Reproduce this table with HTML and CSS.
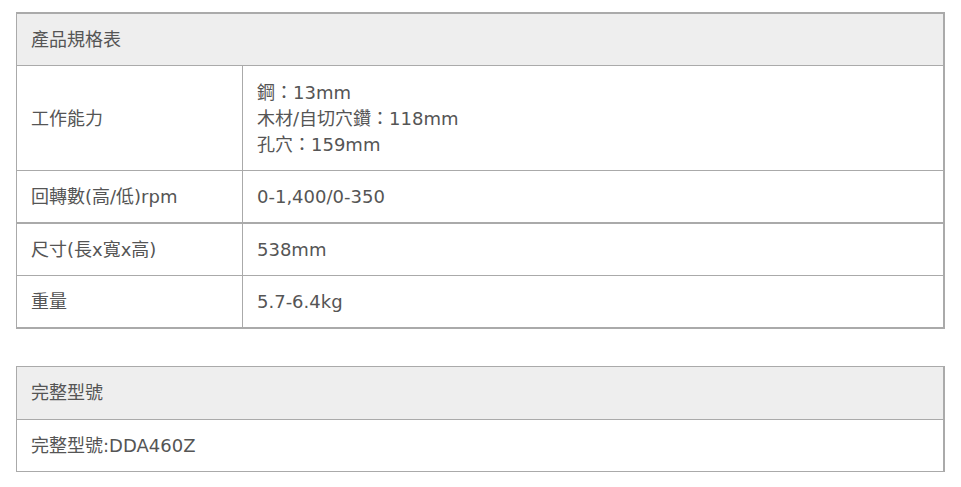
FILE: index.html
```html
<!DOCTYPE html>
<html lang="zh-Hant">
<head>
  <meta charset="UTF-8" />
  <meta name="viewport" content="width=device-width, initial-scale=1.0"/>
  <title>產品規格表</title>
  <link rel="stylesheet" href="styles.css">
</head>
<body>

  <div class="spec-wrap">
    <table class="spec-table">
      <tr>
        <th colspan="2">產品規格表</th>
      </tr>
      <tr class="tall">
        <td class="spec-label">工作能力</td>
        <td class="spec-value">鋼：13mm<br>木材/自切穴鑽：118mm<br>孔穴：159mm</td>
      </tr>
      <tr class="thick">
        <td class="spec-label">回轉數(高/低)rpm</td>
        <td class="spec-value">0-1,400/0-350</td>
      </tr>
      <tr>
        <td class="spec-label">尺寸(長x寬x高)</td>
        <td class="spec-value">538mm</td>
      </tr>
      <tr class="last">
        <td class="spec-label">重量</td>
        <td class="spec-value">5.7-6.4kg</td>
      </tr>
    </table>

    <table class="spec-table model-table">
      <tr>
        <th>完整型號</th>
      </tr>
      <tr class="last">
        <td>完整型號:DDA460Z</td>
      </tr>
    </table>
  </div>

</body>
</html>
```

FILE: styles.css
```css
body {
  margin: 0;
  font-family: "DejaVu Sans", "Noto Sans CJK TC", sans-serif;
  font-size: 18px;
  color: #555;
  background-color: white;
}

.spec-wrap {
  padding: 12px 16px 0 16px;
  display: flex;
  flex-direction: column;
  gap: 37px;
}

.spec-table {
  width: 100%;
  border-collapse: separate;
  border-spacing: 0;
  border-top: 2px solid #aaa;
  border-right: 2px solid #aaa;
  border-bottom: 2px solid #aaa;
  border-left: 1px solid #aaa;
}

.spec-table th,
.spec-table td {
  text-align: left;
  font-weight: normal;
  line-height: 26px;
  padding: 13px 14px 12px 14px;
  border-bottom: 1px solid #aaa;
  vertical-align: middle;
}

.spec-table th {
  background-color: #eee;
}

.spec-table tr.tall td {
  padding-top: 14px;
  padding-bottom: 12px;
}

.spec-table tr.thick td {
  border-bottom: 2px solid #aaa;
}

.spec-table tr.last td {
  border-bottom: none;
}

.spec-label {
  width: 197px;
}

.spec-value {
  border-left: 1px solid #aaa;
}

.model-table {
  border-top: 1px solid #aaa;
  border-bottom: 1px solid #aaa;
}

.model-table th {
  padding-bottom: 13px;
}
```
